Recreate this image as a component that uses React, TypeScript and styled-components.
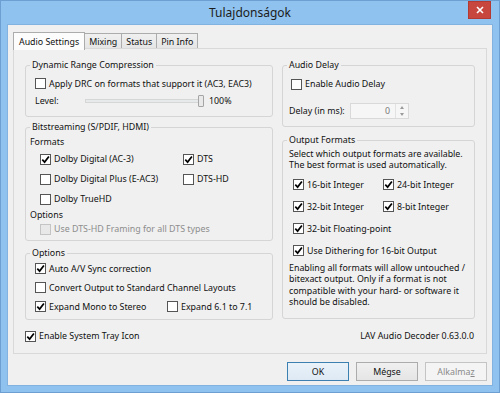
import styled, { createGlobalStyle } from "styled-components"

const GlobalStyle = createGlobalStyle`
	html, body {
		margin: 0;
		padding: 0;
		background: #ffffff;
	}
	body {
		font-family: "Noto Sans", "Open Sans", sans-serif;
		font-size: 8.85px;
		color: #111111;
	}
`

function Check({ checked, disabled, children }: { checked?: boolean, disabled?: boolean, children: React.ReactNode }) {
	return (
		<CheckWrap>
			<Box $disabled={disabled}>
				{checked && (
					<svg width="9" height="9" viewBox="0 0 9 9">
						<path d="M1.3 4.6 L3.6 7.1 L7.9 1.4" fill="none" stroke="#000" strokeWidth="1.7" />
					</svg>
				)}
			</Box>
			<CheckText $disabled={disabled}>{children}</CheckText>
		</CheckWrap>
	)
}

function App() {
	return (
		<>
			<GlobalStyle />
			<Window>
				<TitleBar>
					<Title>Tulajdonságok</Title>
					<CloseButton>
						<svg width="8" height="8" viewBox="0 0 8 8">
							<path d="M1 1 L7 7 M7 1 L1 7" stroke="#fff" strokeWidth="1.6" />
						</svg>
					</CloseButton>
				</TitleBar>
				<Client>
					<TabStrip>
						<Tab $active>Audio Settings</Tab>
						<Tab>Mixing</Tab>
						<Tab>Status</Tab>
						<Tab>Pin Info</Tab>
					</TabStrip>
					<Panel>
						<Columns>
							<Column $gap={4}>
								<Group $pb={7}>
									<Legend>Dynamic Range Compression</Legend>
									<Row $h={17} $indent={5} $mt={4}>
										<Check>Apply DRC on formats that support it (AC3, EAC3)</Check>
									</Row>
									<Row $h={17} $indent={5}>
										<FieldLabel $w={50}>Level:</FieldLabel>
										<Track />
										<Thumb />
										<Percent>100%</Percent>
									</Row>
								</Group>
								<Group $pb={3}>
									<Legend>Bitstreaming (S/PDIF, HDMI)</Legend>
									<Row $h={14} $indent={0} $mt={2}>Formats</Row>
									<FormatGrid $col={143}>
										<Row $h={20} $indent={0}><Check checked>Dolby Digital (AC-3)</Check></Row>
										<Row $h={20} $indent={0}><Check checked>DTS</Check></Row>
										<Row $h={20} $indent={0}><Check>Dolby Digital Plus (E-AC3)</Check></Row>
										<Row $h={20} $indent={0}><Check>DTS-HD</Check></Row>
										<Row $h={20} $indent={0}><Check>Dolby TrueHD</Check></Row>
									</FormatGrid>
									<Row $h={12} $indent={0}>Options</Row>
									<Row $h={16} $indent={10}>
										<Check disabled>Use DTS-HD Framing for all DTS types</Check>
									</Row>
								</Group>
								<Group $pb={3} $mt={2}>
									<Legend>Options</Legend>
									<Row $h={19} $indent={5}><Check checked>Auto A/V Sync correction</Check></Row>
									<Row $h={19} $indent={5}><Check>Convert Output to Standard Channel Layouts</Check></Row>
									<FormatGrid $col={132} $indent={5}>
										<Row $h={19} $indent={0}><Check checked>Expand Mono to Stereo</Check></Row>
										<Row $h={19} $indent={0}><Check>Expand 6.1 to 7.1</Check></Row>
									</FormatGrid>
								</Group>
							</Column>
							<Column $gap={7}>
								<Group $pb={7}>
									<Legend>Audio Delay</Legend>
									<Row $h={16} $indent={4} $mt={5}>
										<Check>Enable Audio Delay</Check>
									</Row>
									<Row $h={17} $indent={2} $mt={10}>
										<FieldLabel $w={61}>Delay (in ms):</FieldLabel>
										<SpinBox>
											<SpinValue>0</SpinValue>
											<SpinButtons>
												<Arrow $up />
												<Arrow />
											</SpinButtons>
										</SpinBox>
									</Row>
								</Group>
								<Group $pb={10}>
									<Legend>Output Formats</Legend>
									<Para $mt={3}>
										Select which output formats are available.<br />
										The best format is used automatically.
									</Para>
									<FormatGrid $col={90} $indent={6} $mt={2}>
										<Row $h={22} $indent={0}><Check checked>16-bit Integer</Check></Row>
										<Row $h={22} $indent={0}><Check checked>24-bit Integer</Check></Row>
										<Row $h={22} $indent={0}><Check checked>32-bit Integer</Check></Row>
										<Row $h={22} $indent={0}><Check checked>8-bit Integer</Check></Row>
									</FormatGrid>
									<Row $h={22} $indent={6}><Check checked>32-bit Floating-point</Check></Row>
									<Row $h={22} $indent={6}><Check checked>Use Dithering for 16-bit Output</Check></Row>
									<Para $mt={1}>
										Enabling all formats will allow untouched /<br />
										bitexact output. Only if a format is not<br />
										compatible with your hard- or software it<br />
										should be disabled.
									</Para>
								</Group>
							</Column>
						</Columns>
						<Footer>
							<Check checked>Enable System Tray Icon</Check>
							<Version>LAV Audio Decoder 0.63.0.0</Version>
						</Footer>
					</Panel>
					<ButtonRow>
						<Button $kind="default">OK</Button>
						<Button>Mégse</Button>
						<Button $kind="disabled">Alkalma<u>z</u></Button>
					</ButtonRow>
				</Client>
			</Window>
		</>
	)
}

const Window = styled.div`
	width: 500px;
	height: 393px;
	box-sizing: border-box;
	display: flex;
	flex-direction: column;
	padding-bottom: 8px;
	background: #8fc2ee;
	box-shadow: inset 0 0 0 1px #6d9fd2;
	overflow: hidden;
`

const TitleBar = styled.div`
	display: grid;
	grid-template-columns: 1fr auto 1fr;
	height: 25px;
	flex: none;
`

const Title = styled.span`
	grid-column: 2;
	font-size: 12px;
	line-height: 26px;
	color: #1b1b1b;
`

const CloseButton = styled.div`
	grid-column: 3;
	justify-self: end;
	width: 23px;
	height: 18px;
	margin-top: 1px;
	margin-right: 9px;
	display: flex;
	align-items: center;
	justify-content: center;
	background: #c7463d;
	box-shadow: inset 0 0 0 1px #b33a33;
`

const Client = styled.div`
	flex: 1;
	display: flex;
	flex-direction: column;
	margin: 0 8px;
	padding: 6px 5px 0;
	background: #f0f0f0;
	box-shadow: 0 0 0 1px #82b3e0;
`

const TabStrip = styled.div`
	display: flex;
	align-items: flex-end;
	height: 18px;
	flex: none;
`

const Tab = styled.div<{ $active?: boolean }>`
	box-sizing: border-box;
	position: relative;
	height: ${p => p.$active ? 18 : 15}px;
	margin-bottom: ${p => p.$active ? -1 : 1}px;
	margin-right: -1px;
	padding: ${p => p.$active ? "3px 5px 0" : "2px 4px 0"};
	line-height: 13px;
	border: 1px solid #acacac;
	border-bottom: none;
	background: ${p => p.$active ? "#fcfcfc" : "linear-gradient(#f0f0f0, #e5e5e5)"};
	z-index: ${p => p.$active ? 2 : 1};
	white-space: nowrap;
`

const Panel = styled.div`
	box-sizing: border-box;
	height: 306px;
	margin-top: -1px;
	display: flex;
	flex-direction: column;
	padding: 10px 11px 9px;
	border: 1px solid #d9d9d9;
	background: #f0f0f0;
`

const Columns = styled.div`
	display: grid;
	grid-template-columns: 248px 193px;
	column-gap: 9px;
	align-items: start;
`

const Column = styled.div<{ $gap: number }>`
	display: flex;
	flex-direction: column;
	gap: ${p => p.$gap}px;
`

const Group = styled.fieldset<{ $pb: number, $mt?: number }>`
	margin: ${p => p.$mt ?? 0}px 0 0;
	min-width: 0;
	padding: 0 4px ${p => p.$pb}px;
	border: 1px solid #d5d5d5;
	border-radius: 3px;
`

const Legend = styled.legend`
	padding: 0 2px;
	line-height: 12px;
`

const Row = styled.div<{ $h: number, $indent: number, $mt?: number }>`
	display: flex;
	align-items: center;
	height: ${p => p.$h}px;
	padding-left: ${p => p.$indent}px;
	margin-top: ${p => p.$mt ?? 0}px;
	white-space: nowrap;
`

const FormatGrid = styled.div<{ $col: number, $indent?: number, $mt?: number }>`
	display: grid;
	grid-template-columns: ${p => p.$col}px auto;
	padding-left: ${p => p.$indent ?? 10}px;
	margin-top: ${p => p.$mt ?? 0}px;
`

const CheckWrap = styled.span`
	display: inline-flex;
	align-items: center;
`

const Box = styled.span<{ $disabled?: boolean }>`
	box-sizing: border-box;
	width: 11px;
	height: 11px;
	flex: none;
	display: inline-flex;
	align-items: center;
	justify-content: center;
	border: 1px solid ${p => p.$disabled ? "#c4c4c4" : "#555555"};
	background: ${p => p.$disabled ? "#e8e8e8" : "#ffffff"};
`

const CheckText = styled.span<{ $disabled?: boolean }>`
	margin-left: 3px;
	color: ${p => p.$disabled ? "#8d8d8d" : "inherit"};
`

const FieldLabel = styled.span<{ $w: number }>`
	width: ${p => p.$w}px;
	flex: none;
`

const Track = styled.div`
	width: 112px;
	height: 2px;
	background: #e7eaea;
	border: 1px solid #d6d6d6;
	box-sizing: content-box;
`

const Thumb = styled.div`
	width: 4px;
	height: 10px;
	margin-left: -1px;
	border: 1px solid #a5a5a5;
	background: #e9e9e9;
	border-radius: 1px;
`

const Percent = styled.span`
	margin-left: 5px;
`

const SpinBox = styled.div`
	display: flex;
	height: 16px;
	box-sizing: border-box;
	border: 1px solid #d9d9d9;
	background: #f6f6f6;
`

const SpinValue = styled.span`
	width: 44px;
	padding-right: 5px;
	text-align: right;
	line-height: 14px;
	color: #7a7a7a;
	box-sizing: border-box;
`

const SpinButtons = styled.div`
	display: flex;
	flex-direction: column;
	width: 12px;
	border-left: 1px solid #e2e2e2;
`

const Arrow = styled.div<{ $up?: boolean }>`
	flex: 1;
	display: flex;
	align-items: center;
	justify-content: center;
	&::after {
		content: "";
		border-left: 2.5px solid transparent;
		border-right: 2.5px solid transparent;
		${p => p.$up ? "border-bottom: 3px solid #9a9a9a;" : "border-top: 3px solid #9a9a9a;"}
	}
`

const Para = styled.div<{ $mt: number }>`
	margin-top: ${p => p.$mt}px;
	padding-left: 2px;
	line-height: 11.4px;
	white-space: nowrap;
`

const Footer = styled.div`
	display: flex;
	align-items: center;
	justify-content: space-between;
	height: 16px;
	margin-top: auto;
	padding-right: 1px;
`

const Version = styled.span``

const ButtonRow = styled.div`
	display: flex;
	justify-content: flex-end;
	gap: 7px;
	padding-top: 8px;
`

const Button = styled.div<{ $kind?: "default" | "disabled" }>`
	box-sizing: border-box;
	width: 62px;
	height: 19px;
	display: flex;
	align-items: center;
	justify-content: center;
	border: 1px solid ${p => p.$kind === "default" ? "#3c7fb1" : p.$kind === "disabled" ? "#c4c4c4" : "#acacac"};
	background: ${p => p.$kind === "default" ? "linear-gradient(#eaf2f9, #dde9f4)" : p.$kind === "disabled" ? "#f4f4f4" : "linear-gradient(#f0f0f0, #e5e5e5)"};
	color: ${p => p.$kind === "disabled" ? "#8a8a8a" : "inherit"};
`

export default App
